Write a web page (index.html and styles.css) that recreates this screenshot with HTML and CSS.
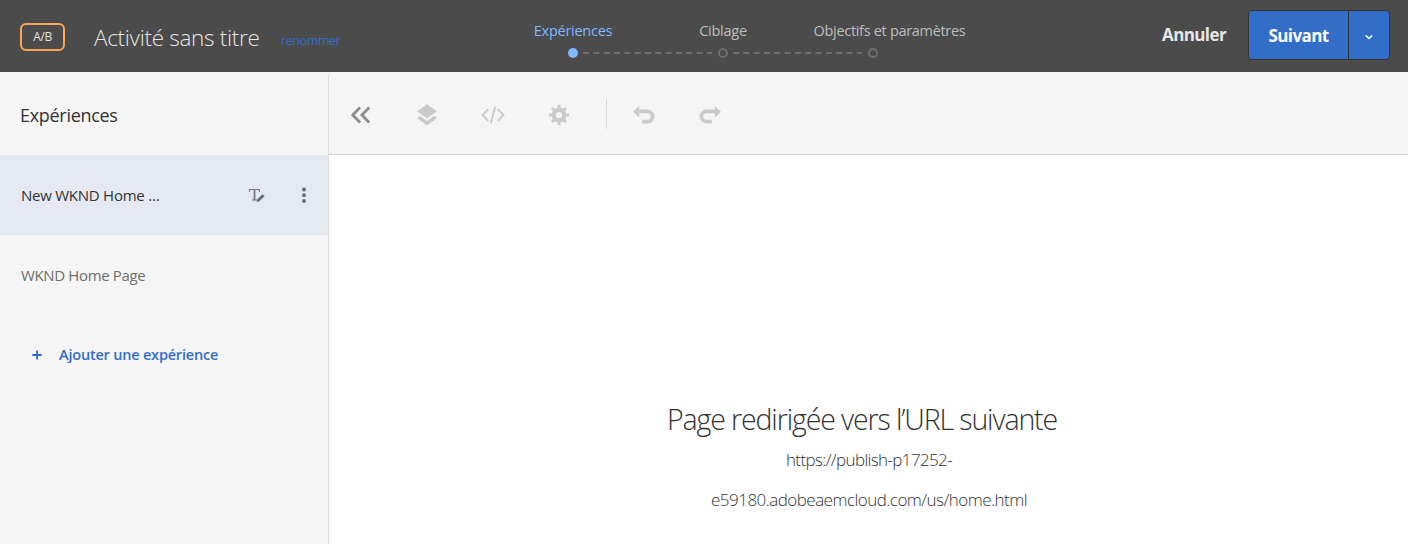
FILE: index.html
```html
<!DOCTYPE html>
<html lang="fr">
<head>
<meta charset="utf-8">
<title>Activité sans titre</title>
<link rel="stylesheet" href="styles.css">
</head>
<body>
<header class="topbar">
  <div class="activity">
    <span class="badge">A/B</span>
    <h1 class="title">Activité sans titre</h1>
    <a class="rename">renommer</a>
  </div>
  <ol class="steps">
    <li class="step active"><span class="label l1">Expériences</span><i class="dot"></i><svg class="dash" width="129" height="2"><path d="M0 1H129" stroke="#6e6e6e" stroke-width="2" stroke-dasharray="6 4.33"/></svg></li>
    <li class="step"><span class="label l2">Ciblage</span><i class="dot"></i><svg class="dash" width="129" height="2"><path d="M0 1H129" stroke="#6e6e6e" stroke-width="2" stroke-dasharray="6 4.33"/></svg></li>
    <li class="step"><span class="label l3">Objectifs et paramètres</span><i class="dot"></i></li>
  </ol>
  <div class="actions">
    <button class="cancel"><span>Annuler</span></button>
    <div class="split">
      <button class="next"><span>Suivant</span></button>
      <button class="more" aria-label="Plus"><svg width="10" height="8" viewBox="0 0 10 8"><path d="M1.8 2.5L5 5.5L8.2 2.5" fill="none" stroke="#fff" stroke-width="1.6"/></svg></button>
    </div>
  </div>
</header>
<main class="body">
  <aside class="side">
    <h2 class="side-title"><span>Expériences</span></h2>
    <div class="row selected">
      <span class="name n1">New WKND Home …</span>
      <svg class="edit" width="16" height="16" viewBox="0 0 16 16"><path d="M0 5V2H11V5H10.2L9.6 3H6.4V12.2L8 12.6V13.4H3V12.6L4.6 12.2V3H1.4L.8 5z" fill="#777a82"/><path d="M7.6 15.2l.8-3.1 5.2-4.8 2 2-5 4.8z" fill="#6b6e77"/></svg>
      <svg class="dots" width="6" height="16" viewBox="0 0 6 16"><circle cx="3" cy="2.5" r="2"/><circle cx="3" cy="8.2" r="2"/><circle cx="3" cy="13.9" r="2"/></svg>
    </div>
    <div class="row"><span class="name n2">WKND Home Page</span></div>
    <button class="add"><svg width="10" height="10" viewBox="0 0 10 10"><path d="M5 .5V9.5M.3 5H9.7" stroke="#326ec8" stroke-width="1.8"/></svg><span>Ajouter une expérience</span></button>
  </aside>
  <section class="stage">
    <div class="toolbar">
      <svg class="collapse" width="20" height="18" viewBox="0 0 20 18"><path d="M9.1 1.5L1.8 9L9.1 16.5M18.2 1.5L10.9 9L18.2 16.5" fill="none" stroke="#8e8e8e" stroke-width="2.8"/></svg>
      <svg width="20" height="22" viewBox="0 0 20 22"><path d="M10 .3L20 7.2L10 14.2L0 7.2zM2.9 11.9L10 16.9L17.1 11.9L20 14L10 21.4L0 14z"/></svg>
      <svg width="24" height="18" viewBox="0 0 24 18"><path d="M7.2 3.2L1.5 9L7.2 14.8M16.8 3.2L22.5 9L16.8 14.8M14.2 .8L9.8 17.2" fill="none" stroke="#cacaca" stroke-width="2"/></svg>
      <svg width="22" height="22" viewBox="0 0 22 22"><circle cx="11" cy="11" r="5.3" fill="none" stroke="#cacaca" stroke-width="4.4"/><path d="M11 .8V5M11 17v4.2M.8 11H5M17 11h4.2M4 4L7 7M15 15l3 3M18 4L15 7M7 15l-3 3" stroke="#cacaca" stroke-width="2.9"/></svg>
      <i class="sep"></i>
      <svg width="22" height="18" viewBox="0 0 22 18"><path d="M0 5.7L6.2 0V11.4z"/><path d="M5 5.4H14.5a5 5 0 0 1 0 10.2H9.2" fill="none" stroke="#cacaca" stroke-width="3.8"/></svg>
      <svg width="22" height="18" viewBox="0 0 22 18"><path d="M22 5.7L15.8 0V11.4z"/><path d="M17 5.4H7.5a5 5 0 0 0 0 10.2H12.8" fill="none" stroke="#cacaca" stroke-width="3.8"/></svg>
    </div>
    <div class="redirect">
      <h3 class="message">Page redirigée vers l’URL suivante</h3>
      <p class="url u1">https://publish-p17252-</p>
      <p class="url u2">e59180.adobeaemcloud.com/us/home.html</p>
    </div>
  </section>
</main>
</body>
</html>
```
FILE: styles.css
```css
* { box-sizing: border-box; }
body { margin: 0; width: 1408px; height: 544px; overflow: hidden; background: #fff; color: #323232; font-family: "Open Sans", "Noto Sans", sans-serif; display: flex; flex-direction: column; }
h1, h2, h3, p, ol { margin: 0; padding: 0; font-weight: 400; }
button { border: 0; background: none; padding: 0; margin: 0; font-family: inherit; }
svg { display: block; flex: none; }
span, a { white-space: nowrap; }
.topbar { height: 72px; flex: none; background: #4b4b4b; display: grid; grid-template-columns: 498px 450px 1fr; }
.activity { display: flex; padding-left: 20px; }
.badge { width: 45px; height: 28px; margin-top: 23px; border: 2px solid #ffa557; border-radius: 6px; color: #e0e0e0; font-size: 12px; font-weight: 500; line-height: 23px; text-align: center; letter-spacing: -.4px; }
.title { margin: 22px 0 0 29px; width: 187px; font-size: 22.5px; line-height: 32px; color: #e6e6e6; font-weight: 300; white-space: nowrap; letter-spacing: -.3px; }
.rename { margin-top: 31px; font-size: 12.5px; line-height: 20px; color: #326ec8; letter-spacing: -.4px; }
.steps { list-style: none; display: grid; grid-template-columns: repeat(3, 150px); }
.step { position: relative; display: flex; flex-direction: column; align-items: center; padding-top: 21px; color: #bebebe; }
.label { font-size: 14.5px; line-height: 20px; letter-spacing: -.25px; }
.l3 { margin-right: -33px; letter-spacing: -.31px; }
.step:last-child .dot { align-self: flex-start; margin-left: 70px; }
.active { color: #82b8ff; }
.dot { width: 10px; height: 10px; margin-top: 7px; border: 2px solid #6e6e6e; border-radius: 50%; }
.active .dot { background: #82b8ff; border-color: #82b8ff; }
.dash { position: absolute; left: 85px; top: 52px; }
.actions { display: flex; justify-content: flex-end; padding: 10px 18px 0 0; }
.cancel { height: 48px; width: 64px; margin-right: 22px; color: #e6e6e6; font-size: 17px; font-weight: 700; text-align: left; letter-spacing: -.6px; }
.split { display: flex; width: 142px; height: 50px; background: #326ec8; border: 1px solid #323232; border-radius: 4px; }
.next { width: 100px; border-right: 1px solid #323232; color: #fff; font-size: 17px; font-weight: 700; letter-spacing: -.6px; }
.more { flex: 1; display: flex; align-items: center; justify-content: center; padding-top: 3px; }
.body { flex: 1; display: grid; grid-template-columns: 329px 1fr; background: #f5f5f5; }
.side { margin-top: 3px; border-right: 1px solid #dcdcdc; }
.side-title { height: 80px; padding-left: 20px; font-size: 18px; line-height: 80px; letter-spacing: -.3px; }
.row { height: 80px; display: flex; align-items: center; padding-left: 21px; color: #6e6e6e; }
.selected { background: #e5e9f1; color: #323232; }
.name { width: 228px; font-size: 15px; letter-spacing: -.25px; }
.n2 { letter-spacing: -.36px; }
.edit { margin-right: 36px; }
.dots { fill: #6b6d75; }
.add { display: flex; align-items: center; gap: 17px; padding-left: 32px; height: 20px; margin-top: 30px; color: #326ec8; font-size: 14.5px; font-weight: 600; line-height: 20px; letter-spacing: -.2px; }
.stage { background: #fff; }
.toolbar { height: 83px; background: #f5f5f5; border-bottom: 1px solid #d3d3d3; display: flex; align-items: center; padding: 3px 0 0 22px; fill: #cacaca; }
.toolbar svg:nth-child(2) { margin-left: 46px; }
.toolbar svg:nth-child(3) { margin-left: 44px; }
.toolbar svg:nth-child(4) { margin-left: 43px; }
.sep { width: 1px; height: 30px; margin: -2px 26px 0 36px; background: #dcdcdc; }
.toolbar svg:nth-child(7) { margin-left: 44px; }
.redirect { padding: 244px 13px 0 0; text-align: center; }
.message { font-size: 28.5px; line-height: 41px; font-weight: 300; letter-spacing: -1.12px; }
.url { font-size: 17px; line-height: 40px; padding-left: 14px; font-weight: 300; letter-spacing: -.53px; }
.u1 { letter-spacing: -.63px; }
```
